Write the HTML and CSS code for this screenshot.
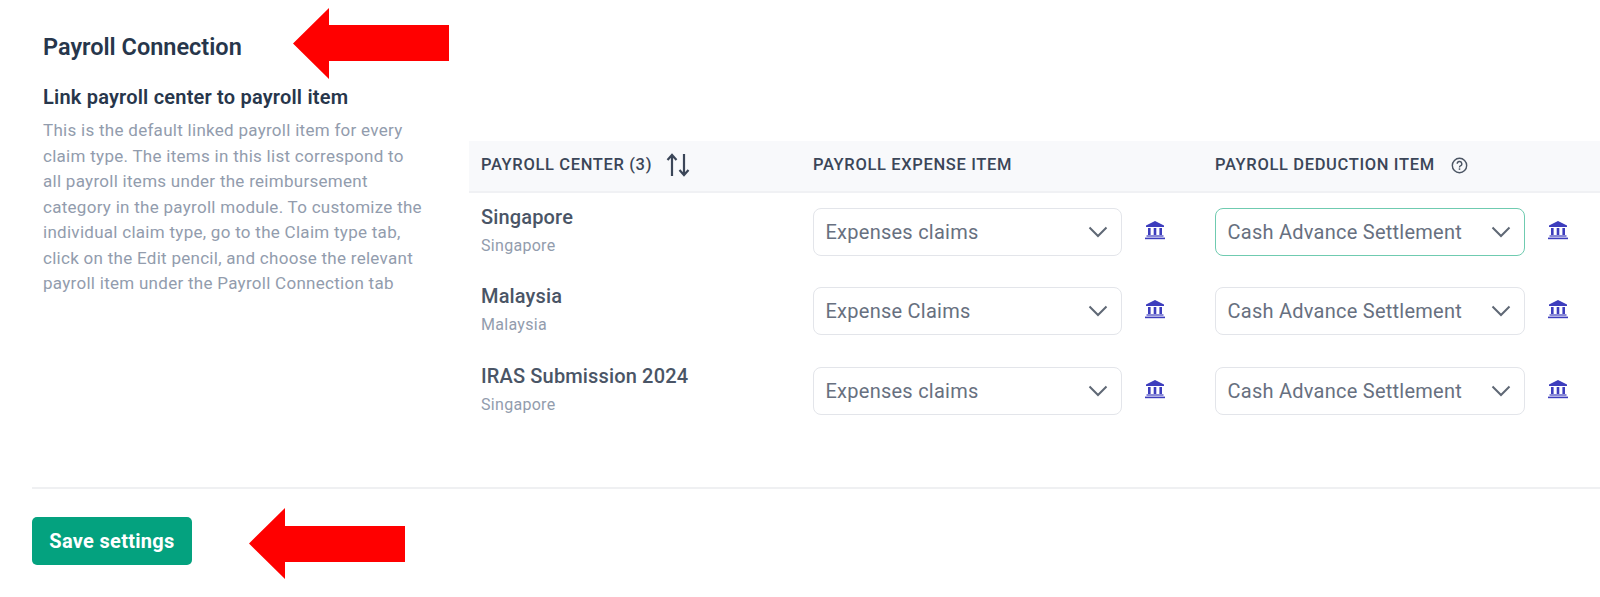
FILE: index.html
```html
<!DOCTYPE html>
<html lang="en">
<head>
<meta charset="utf-8">
<title>Payroll Connection</title>
<link rel="stylesheet" href="styles.css">
</head>
<body>
<svg class="defs" width="0" height="0" aria-hidden="true">
  <symbol id="bank" viewBox="0 0 20 20">
    <path d="M10 1 L19 5.6 V7 H1 V5.6 Z" fill="currentColor"/>
    <rect x="3" y="8" width="2.6" height="7" fill="currentColor"/>
    <rect x="8.7" y="8" width="2.6" height="7" fill="currentColor"/>
    <rect x="14.4" y="8" width="2.6" height="7" fill="currentColor"/>
    <rect x="1.5" y="15.4" width="17" height="1.2" fill="currentColor"/>
    <rect x="0" y="17.6" width="20" height="1.6" fill="currentColor"/>
  </symbol>
  <symbol id="chev" viewBox="0 0 20 12">
    <path d="M1.5 1.5 L10 10 L18.5 1.5" fill="none" stroke="currentColor" stroke-width="2"/>
  </symbol>
</svg>
<main class="main">
  <section class="intro">
    <h1 class="title">Payroll Connection</h1>
    <h2 class="subtitle">Link payroll center to payroll item</h2>
    <p class="desc">This is the default linked payroll item for every<br>claim type. The items in this list correspond to<br>all payroll items under the reimbursement<br>category in the payroll module. To customize the<br>individual claim type, go to the Claim type tab,<br>click on the Edit pencil, and choose the relevant<br>payroll item under the Payroll Connection tab</p>
  </section>
  <section class="table">
    <div class="row head">
      <div class="th th-first">PAYROLL CENTER (3)
        <svg class="sort" viewBox="0 0 24 24" aria-hidden="true"><path d="M6 23 V2 M1.5 7 L6 2 L10.5 7 M18 1 V22 M13.5 17 L18 22 L22.5 17" fill="none" stroke="currentColor" stroke-width="2.2"/></svg>
      </div>
      <div class="th">PAYROLL EXPENSE ITEM</div>
      <div class="th">PAYROLL DEDUCTION ITEM
        <svg class="help" viewBox="0 0 18 18" aria-hidden="true"><circle cx="9" cy="9" r="7.6" fill="none" stroke="currentColor" stroke-width="1.5"/><path d="M6.6 7.2 A2.4 2.4 0 1 1 9.9 9.4 C9.2 9.8 9 10.1 9 11" fill="none" stroke="currentColor" stroke-width="1.5"/><rect x="8.2" y="12" width="1.6" height="1.6" fill="currentColor"/></svg>
      </div>
    </div>
    <div class="row body">
      <div class="center"><div class="name">Singapore</div><div class="country">Singapore</div></div>
      <div class="cell"><div class="select">Expenses claims<svg class="chev"><use href="#chev"/></svg></div><svg class="bank"><use href="#bank"/></svg></div>
      <div class="cell"><div class="select focus">Cash Advance Settlement<svg class="chev"><use href="#chev"/></svg></div><svg class="bank"><use href="#bank"/></svg></div>
    </div>
    <div class="row body">
      <div class="center"><div class="name">Malaysia</div><div class="country">Malaysia</div></div>
      <div class="cell"><div class="select">Expense Claims<svg class="chev"><use href="#chev"/></svg></div><svg class="bank"><use href="#bank"/></svg></div>
      <div class="cell"><div class="select">Cash Advance Settlement<svg class="chev"><use href="#chev"/></svg></div><svg class="bank"><use href="#bank"/></svg></div>
    </div>
    <div class="row body">
      <div class="center"><div class="name">IRAS Submission 2024</div><div class="country">Singapore</div></div>
      <div class="cell"><div class="select">Expenses claims<svg class="chev"><use href="#chev"/></svg></div><svg class="bank"><use href="#bank"/></svg></div>
      <div class="cell"><div class="select">Cash Advance Settlement<svg class="chev"><use href="#chev"/></svg></div><svg class="bank"><use href="#bank"/></svg></div>
    </div>
  </section>
</main>
<footer class="footer">
  <button class="save" type="button">Save settings</button>
</footer>
<svg class="arrow arrow-top" viewBox="0 0 156 71" aria-hidden="true"><path d="M0 35.5 L36 0 V17 H156 V53 H36 V71 Z"/></svg>
<svg class="arrow arrow-bottom" viewBox="0 0 156 71" aria-hidden="true"><path d="M0 35.5 L36 0 V18 H156 V54 H36 V71 Z"/></svg>
</body>
</html>
```

FILE: styles.css
```css
* { box-sizing: border-box; }
html, body { margin: 0; height: 597px; overflow: hidden; background: #fff; }
body { position: relative; font-family: Roboto, "Liberation Sans", sans-serif; color: #2d3a4f; }
.defs { position: absolute; }

.main { display: flex; height: 487px; }
.intro { width: 469px; flex: none; padding: 32px 0 0 43px; }
.title { margin: 0; font-size: 23.5px; line-height: 30px; font-weight: 600; color: #27364b; }
.subtitle { margin: 22px 0 0; font-size: 20px; line-height: 26px; font-weight: 600; letter-spacing: 0.2px; color: #27364b; }
.desc { margin: 8px 0 0; white-space: nowrap; font-size: 17px; line-height: 25.5px; letter-spacing: 0.28px; color: #929cad; }

.table { flex: 1; padding-top: 141px; min-width: 0; }
.row { display: grid; grid-template-columns: 344px 402px 1fr; }
.head { height: 52px; align-items: center; padding-bottom: 2px; background: #f8f9fb; border-bottom: 2px solid #f0f1f4; }
.th { display: flex; align-items: center; font-size: 16.5px; line-height: 20px; font-weight: 500; letter-spacing: 0.65px; color: #3b4658; }
.th-first { padding-left: 12px; }
.sort { width: 24px; height: 24px; margin-left: 14px; color: #3b4658; }
.help { width: 17px; height: 17px; margin-left: 16px; color: #4b5563; }

.body { height: 79.5px; padding-top: 14.75px; }
.center { padding: 0 0 0 12px; margin-top: -4px; }
.name { font-size: 20px; line-height: 26px; font-weight: 500; letter-spacing: 0.15px; color: #4a5566; }
.country { margin-top: 5px; font-size: 16px; line-height: 22px; letter-spacing: 0.3px; color: #929cad; }
.cell { display: flex; align-items: flex-start; }
.select { display: flex; align-items: center; justify-content: space-between; width: 309px; height: 48px; padding: 0 13px 0 11.5px; background: #fff; border: 1.5px solid #e3e5ea; border-radius: 8px; font-size: 20px; letter-spacing: 0.25px; color: #677080; }
.cell:last-child .select { width: 310px; }
.focus { border-color: #6fcbb0; }
.chev { width: 20px; height: 12px; color: #5f6875; flex: none; }
.bank { width: 20px; height: 20px; margin: 12px 0 0 23px; color: #3d3dbd; flex: none; }

.footer { border-top: 2px solid #eff0f2; margin-left: 32px; padding-top: 28px; }
.save { display: block; width: 160px; height: 48px; padding: 0; border: 0; border-radius: 5px; background: #04a27f; color: #fff; font-family: Roboto, sans-serif; font-size: 20px; font-weight: 700; letter-spacing: 0.3px; }

.arrow { position: absolute; width: 156px; height: 71px; fill: #ff0000; }
.arrow-top { left: 293px; top: 8px; }
.arrow-bottom { left: 249px; top: 508px; }
```
